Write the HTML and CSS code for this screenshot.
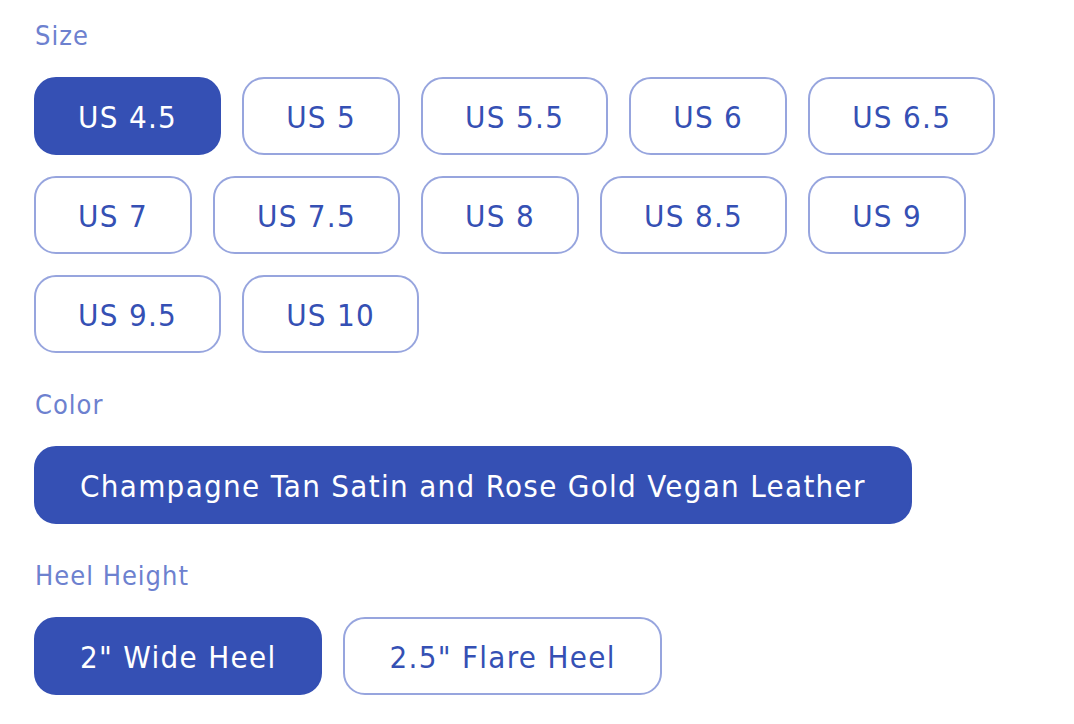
FILE: index.html
```html
<!DOCTYPE html>
<html>
<head>
<meta charset="utf-8">
<link rel="stylesheet" href="styles.css">
</head>
<body>
<div class="options">
  <section class="group">
    <div class="label">Size</div>
    <div class="choices sizes">
      <button class="chip selected">US 4.5</button>
      <button class="chip">US 5</button>
      <button class="chip">US 5.5</button>
      <button class="chip">US 6</button>
      <button class="chip">US 6.5</button>
      <button class="chip">US 7</button>
      <button class="chip">US 7.5</button>
      <button class="chip">US 8</button>
      <button class="chip">US 8.5</button>
      <button class="chip">US 9</button>
      <button class="chip">US 9.5</button>
      <button class="chip">US 10</button>
    </div>
  </section>
  <section class="group">
    <div class="label">Color</div>
    <div class="choices">
      <button class="chip selected">Champagne Tan Satin and Rose Gold Vegan Leather</button>
    </div>
  </section>
  <section class="group">
    <div class="label">Heel Height</div>
    <div class="choices">
      <button class="chip selected">2" Wide Heel</button>
      <button class="chip">2.5" Flare Heel</button>
    </div>
  </section>
</div>
</body>
</html>
```
FILE: styles.css
```css
html, body {
  margin: 0;
  padding: 0;
  background: #ffffff;
}
.options {
  padding: 18px 34px 0 34px;
  font-family: "DejaVu Sans Condensed", "DejaVu Sans", sans-serif;
  display: flex;
  flex-direction: column;
  gap: 34px;
}
.group {
  display: flex;
  flex-direction: column;
  gap: 23px;
}
.label {
  font-size: 27px;
  line-height: 36px;
  color: #6d81cf;
  letter-spacing: 1px;
  padding-left: 1px;
}
.choices {
  display: flex;
  flex-wrap: wrap;
  gap: 21px 21px;
}
.chip {
  font-family: inherit;
  font-size: 31px;
  line-height: 36px;
  letter-spacing: 1.3px;
  padding: 20px 44px 18px 44px;
  border: 2px solid #97a5de;
  border-radius: 22px;
  background: #ffffff;
  color: #3550b4;
  cursor: pointer;
}
.sizes .chip {
  padding: 20px 42px 18px 42px;
}
.chip.selected {
  background: #3550b4;
  border-color: #3550b4;
  color: #ffffff;
}
```
